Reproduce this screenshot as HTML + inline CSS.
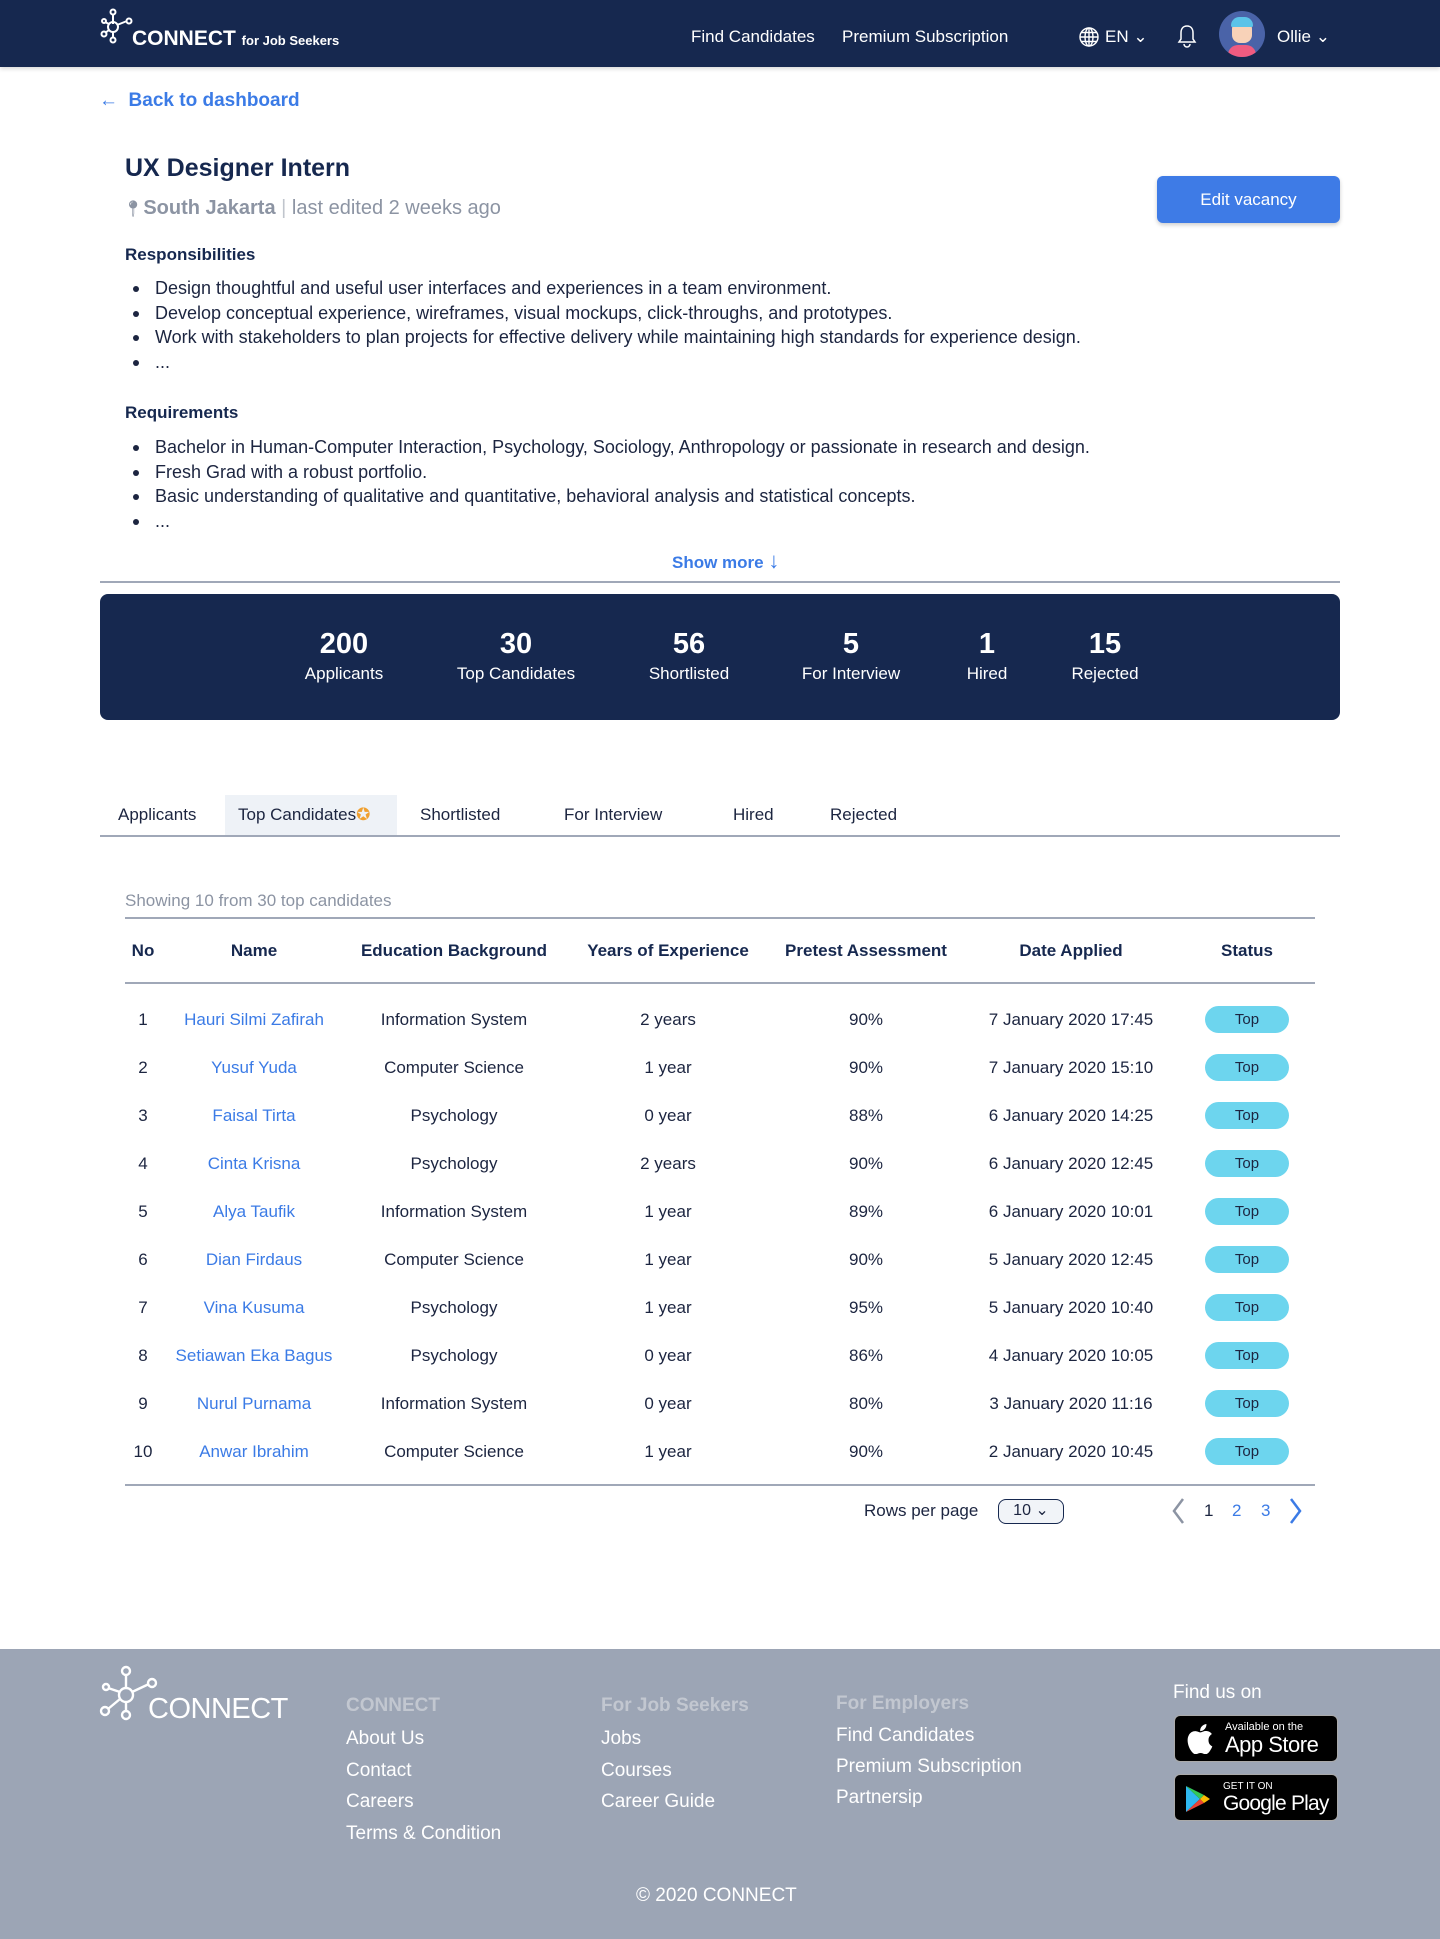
<!DOCTYPE html>
<html><head><meta charset="utf-8"><style>
*{box-sizing:border-box;margin:0;padding:0}
body{width:1440px;height:1939px;position:relative;font-family:"Liberation Sans",sans-serif;color:#1c2540;background:#fff;overflow:hidden}
.a{position:absolute;white-space:nowrap}
.nav{position:absolute;left:0;top:0;width:1440px;height:67px;background:#16284f;box-shadow:0 2px 4px rgba(0,0,0,.15)}
.nav .a{color:#fff}
.blue{color:#3b7be6}
ul.b{position:absolute;left:155px;list-style:none;font-size:18px;line-height:24.7px;color:#1c2540}
ul.b li{position:relative}
ul.b li:before{content:"";position:absolute;left:-22px;top:10px;width:6px;height:6px;border-radius:50%;background:#1c2540}
.stats{position:absolute;left:100px;top:594px;width:1240px;height:126px;background:#16284f;border-radius:8px;color:#fff}
.stat{position:absolute;top:34px;text-align:center;transform:translateX(-50%)}
.stat b{display:block;font-size:29px;line-height:32px}
.stat span{display:block;font-size:17px;margin-top:4px}
.tab{position:absolute;top:805px;font-size:17px;color:#1c2540}
.hr{position:absolute;height:1.5px;background:#a0a8b8}
.row{position:absolute;left:125px;width:1190px;height:30px;font-size:17px}
.row div{position:absolute;top:1px;transform:translateX(-50%);white-space:nowrap}
.top{background:#6dd5ee;border-radius:14px;width:84px;height:27px;text-align:center;line-height:27px;font-size:15px;top:-3px!important}
.foot{position:absolute;left:0;top:1649px;width:1440px;height:290px;background:#9ca5b5;color:#fff}
.foot .a{font-size:19px}
.fh{color:#c2c7d0;font-weight:bold}
.badge{position:absolute;left:1174px;width:164px;height:47px;background:#000;border:1px solid #aaa;border-radius:6px;color:#fff;overflow:hidden}
</style></head><body>
<div class="nav">
 <svg class="a" style="left:100px;top:8px" width="36" height="36" viewBox="0 0 36 36" fill="none" stroke="#fff" stroke-width="2"><circle cx="13" cy="4" r="2.5"/><circle cx="13" cy="19" r="5"/><circle cx="29" cy="13" r="2.5"/><circle cx="4" cy="26" r="2.5"/><circle cx="13" cy="32" r="2.5"/><circle cx="4" cy="13" r="2"/><path d="M13 7v9M17 17l10-4M9 22l-4 3M13 24v6M9 16l-4-2"/></svg>
 <div class="a" style="left:132px;top:27px;font-size:21px;font-weight:bold">CONNECT <span style="font-size:13px">for Job Seekers</span></div>
 <div class="a" style="left:691px;top:27px;font-size:17px">Find Candidates</div>
 <div class="a" style="left:842px;top:27px;font-size:17px">Premium Subscription</div>
 <svg class="a" style="left:1079px;top:27px" width="20" height="20" viewBox="0 0 20 20" fill="none" stroke="#fff" stroke-width="1.4"><circle cx="10" cy="10" r="9"/><ellipse cx="10" cy="10" rx="4" ry="9"/><path d="M1 10h18M2.5 5.5h15M2.5 14.5h15M10 1v18"/></svg>
 <div class="a" style="left:1105px;top:27px;font-size:17px">EN ⌄</div>
 <svg class="a" style="left:1177px;top:24px" width="20" height="24" viewBox="0 0 20 24" fill="none" stroke="#fff" stroke-width="1.5"><path d="M10 2c-4 0-6 3-6 7v6l-2 3h16l-2-3V9c0-4-2-7-6-7zM7 20a3 3 0 0 0 6 0"/></svg>
 <div class="a" style="left:1219px;top:11px;width:46px;height:46px;border-radius:50%;background:#4a63a8;overflow:hidden">
  <div class="a" style="left:13px;top:10px;width:20px;height:22px;border-radius:8px;background:#f8d2b8"></div>
  <div class="a" style="left:12px;top:6px;width:22px;height:10px;border-radius:10px 10px 2px 2px;background:#5bc3e8"></div>
  <div class="a" style="left:9px;top:34px;width:28px;height:14px;border-radius:10px 10px 0 0;background:#f05b80"></div>
 </div>
 <div class="a" style="left:1277px;top:27px;font-size:17px">Ollie ⌄</div>
</div>

<div class="a blue" style="left:99px;top:90px;font-size:19px;font-weight:bold">←&nbsp; Back to dashboard</div>
<div class="a" style="left:125px;top:154px;font-size:25px;font-weight:bold;color:#16284f">UX Designer Intern</div>
<div class="a" style="left:123px;top:197px;font-size:20px;color:#8c94a3"><span style="font-size:16px">📍︎</span><b style="color:#8c94a3">South Jakarta</b> <span style="color:#c0c5cd">|</span> last edited 2 weeks ago</div>
<div class="a" style="left:1157px;top:176px;width:183px;height:47px;border-radius:6px;background:#3e7be6;color:#fff;font-size:17px;text-align:center;line-height:47px;box-shadow:0 2px 4px rgba(0,0,0,.2)">Edit vacancy</div>

<div class="a" style="left:125px;top:245px;font-size:17px;font-weight:bold;color:#16284f">Responsibilities</div>
<ul class="b" style="top:276px"><li>Design thoughtful and useful user interfaces and experiences in a team environment.</li><li>Develop conceptual experience, wireframes, visual mockups, click-throughs, and prototypes.</li><li>Work with stakeholders to plan projects for effective delivery while maintaining high standards for experience design.</li><li>...</li></ul>
<div class="a" style="left:125px;top:403px;font-size:17px;font-weight:bold;color:#16284f">Requirements</div>
<ul class="b" style="top:435px"><li>Bachelor in Human-Computer Interaction, Psychology, Sociology, Anthropology or passionate in research and design.</li><li>Fresh Grad with a robust portfolio.</li><li>Basic understanding of qualitative and quantitative, behavioral analysis and statistical concepts.</li><li>...</li></ul>
<div class="a blue" style="left:672px;top:548px;font-size:17px;font-weight:bold">Show more <span style="font-weight:normal;font-size:22px">↓</span></div>
<div class="hr" style="left:100px;top:581px;width:1240px"></div>

<div class="stats">
 <div class="stat" style="left:244px"><b>200</b><span>Applicants</span></div>
 <div class="stat" style="left:416px"><b>30</b><span>Top Candidates</span></div>
 <div class="stat" style="left:589px"><b>56</b><span>Shortlisted</span></div>
 <div class="stat" style="left:751px"><b>5</b><span>For Interview</span></div>
 <div class="stat" style="left:887px"><b>1</b><span>Hired</span></div>
 <div class="stat" style="left:1005px"><b>15</b><span>Rejected</span></div>
</div>

<div class="a" style="left:225px;top:795px;width:172px;height:40px;background:#eef2f7"></div>
<div class="tab" style="left:118px">Applicants</div>
<div class="tab blue" style="left:238px">Top Candidates<span style="color:#f0a030">✪</span></div>
<div class="tab" style="left:420px">Shortlisted</div>
<div class="tab" style="left:564px">For Interview</div>
<div class="tab" style="left:733px">Hired</div>
<div class="tab" style="left:830px">Rejected</div>
<div class="hr" style="left:100px;top:835px;width:1240px"></div>

<div class="a" style="left:125px;top:891px;font-size:17px;color:#8c94a3">Showing 10 from 30 top candidates</div>
<div class="hr" style="left:125px;top:917px;width:1190px"></div>
<div class="row" style="top:940px;font-weight:bold;color:#16284f"><div style="left:18px">No</div><div style="left:129px">Name</div><div style="left:329px">Education Background</div><div style="left:543px">Years of Experience</div><div style="left:741px">Pretest Assessment</div><div style="left:946px">Date Applied</div><div style="left:1122px">Status</div></div>
<div class="hr" style="left:125px;top:982px;width:1190px"></div>

<div class="row" style="top:1009px"><div style="left:18px">1</div><div class="blue" style="left:129px">Hauri Silmi Zafirah</div><div style="left:329px">Information System</div><div style="left:543px">2 years</div><div style="left:741px">90%</div><div style="left:946px">7 January 2020 17:45</div><div class="top" style="left:1122px">Top</div></div>
<div class="row" style="top:1057px"><div style="left:18px">2</div><div class="blue" style="left:129px">Yusuf Yuda</div><div style="left:329px">Computer Science</div><div style="left:543px">1 year</div><div style="left:741px">90%</div><div style="left:946px">7 January 2020 15:10</div><div class="top" style="left:1122px">Top</div></div>
<div class="row" style="top:1105px"><div style="left:18px">3</div><div class="blue" style="left:129px">Faisal Tirta</div><div style="left:329px">Psychology</div><div style="left:543px">0 year</div><div style="left:741px">88%</div><div style="left:946px">6 January 2020 14:25</div><div class="top" style="left:1122px">Top</div></div>
<div class="row" style="top:1153px"><div style="left:18px">4</div><div class="blue" style="left:129px">Cinta Krisna</div><div style="left:329px">Psychology</div><div style="left:543px">2 years</div><div style="left:741px">90%</div><div style="left:946px">6 January 2020 12:45</div><div class="top" style="left:1122px">Top</div></div>
<div class="row" style="top:1201px"><div style="left:18px">5</div><div class="blue" style="left:129px">Alya Taufik</div><div style="left:329px">Information System</div><div style="left:543px">1 year</div><div style="left:741px">89%</div><div style="left:946px">6 January 2020 10:01</div><div class="top" style="left:1122px">Top</div></div>
<div class="row" style="top:1249px"><div style="left:18px">6</div><div class="blue" style="left:129px">Dian Firdaus</div><div style="left:329px">Computer Science</div><div style="left:543px">1 year</div><div style="left:741px">90%</div><div style="left:946px">5 January 2020 12:45</div><div class="top" style="left:1122px">Top</div></div>
<div class="row" style="top:1297px"><div style="left:18px">7</div><div class="blue" style="left:129px">Vina Kusuma</div><div style="left:329px">Psychology</div><div style="left:543px">1 year</div><div style="left:741px">95%</div><div style="left:946px">5 January 2020 10:40</div><div class="top" style="left:1122px">Top</div></div>
<div class="row" style="top:1345px"><div style="left:18px">8</div><div class="blue" style="left:129px">Setiawan Eka Bagus</div><div style="left:329px">Psychology</div><div style="left:543px">0 year</div><div style="left:741px">86%</div><div style="left:946px">4 January 2020 10:05</div><div class="top" style="left:1122px">Top</div></div>
<div class="row" style="top:1393px"><div style="left:18px">9</div><div class="blue" style="left:129px">Nurul Purnama</div><div style="left:329px">Information System</div><div style="left:543px">0 year</div><div style="left:741px">80%</div><div style="left:946px">3 January 2020 11:16</div><div class="top" style="left:1122px">Top</div></div>
<div class="row" style="top:1441px"><div style="left:18px">10</div><div class="blue" style="left:129px">Anwar Ibrahim</div><div style="left:329px">Computer Science</div><div style="left:543px">1 year</div><div style="left:741px">90%</div><div style="left:946px">2 January 2020 10:45</div><div class="top" style="left:1122px">Top</div></div>
<div class="hr" style="left:125px;top:1484px;width:1190px"></div>

<div class="a" style="left:864px;top:1501px;font-size:17px">Rows per page</div>
<div class="a" style="left:998px;top:1499px;width:66px;height:25px;border:1.5px solid #16284f;border-radius:8px;background:#f1f4f8;font-size:16px;text-align:center;line-height:22px">10 ⌄</div>
<svg class="a" style="left:1170px;top:1497px" width="16" height="28" viewBox="0 0 16 28" fill="none" stroke="#8c94a3" stroke-width="2.5"><path d="M13 2L4 14l9 12"/></svg>
<div class="a" style="left:1204px;top:1501px;font-size:17px">1</div>
<div class="a blue" style="left:1232px;top:1501px;font-size:17px">2</div>
<div class="a blue" style="left:1261px;top:1501px;font-size:17px">3</div>
<svg class="a" style="left:1288px;top:1497px" width="16" height="28" viewBox="0 0 16 28" fill="none" stroke="#3b7be6" stroke-width="2.5"><path d="M3 2l9 12-9 12"/></svg>

<div class="foot">
 <svg class="a" style="left:99px;top:16px" width="60" height="56" viewBox="0 0 60 56" fill="none" stroke="#fff" stroke-width="2.4"><circle cx="27" cy="6" r="4"/><circle cx="27" cy="30" r="7"/><circle cx="53" cy="18" r="4"/><circle cx="6" cy="46" r="4"/><circle cx="27" cy="50" r="4"/><circle cx="7" cy="22" r="3"/><path d="M27 10v13M33 27l17-8M21 34l-12 10M27 37v9M21 27L9 23"/></svg>
 <div class="a" style="left:148px;top:44px;font-size:29px;color:#fff;letter-spacing:-0.5px">CONNECT</div>
 <div class="a fh" style="left:346px;top:46px;font-size:19px">CONNECT</div>
 <div class="a" style="left:346px;top:79px">About Us</div><div class="a" style="left:346px;top:111px">Contact</div><div class="a" style="left:346px;top:142px">Careers</div><div class="a" style="left:346px;top:174px">Terms &amp; Condition</div>
 <div class="a fh" style="left:601px;top:46px;font-size:19px">For Job Seekers</div>
 <div class="a" style="left:601px;top:79px">Jobs</div><div class="a" style="left:601px;top:111px">Courses</div><div class="a" style="left:601px;top:142px">Career Guide</div>
 <div class="a fh" style="left:836px;top:44px;font-size:19px">For Employers</div>
 <div class="a" style="left:836px;top:76px">Find Candidates</div><div class="a" style="left:836px;top:107px">Premium Subscription</div><div class="a" style="left:836px;top:138px">Partnersip</div>
 <div class="a" style="left:1173px;top:33px">Find us on</div>
 <div class="badge" style="top:66px"><svg class="a" style="left:12px;top:8px" width="26" height="30" viewBox="0 0 26 30"><path fill="#fff" d="M21.5 16c0-4 3.2-5.8 3.4-6-1.9-2.7-4.7-3-5.7-3-2.4-.3-4.7 1.4-5.9 1.4-1.2 0-3.1-1.4-5.1-1.3C5.6 7.1 3.2 8.6 1.9 11c-2.7 4.7-.7 11.6 1.9 15.4 1.3 1.8 2.8 3.9 4.8 3.8 1.9-.1 2.7-1.2 5-1.2s3 1.2 5 1.2c2.1 0 3.4-1.9 4.6-3.7 1.5-2.1 2.1-4.1 2.1-4.2-.1 0-4-1.5-3.8-6.3zM17.8 4.9c1-1.3 1.8-3 1.6-4.9-1.6.1-3.5 1.1-4.6 2.4-1 1.1-1.9 2.9-1.6 4.7 1.7.1 3.5-.9 4.6-2.2z"/></svg><div class="a" style="left:50px;top:5px;font-size:11px">Available on the</div><div class="a" style="left:50px;top:16px;font-size:22px;letter-spacing:-0.5px">App Store</div></div>
 <div class="badge" style="top:125px"><svg class="a" style="left:10px;top:10px" width="26" height="28" viewBox="0 0 26 28"><path d="M1 1l14 13L1 27z" fill="#2fb8f0"/><path d="M1 1l18 9-4 4z" fill="#34c759"/><path d="M1 27l18-9-4-4z" fill="#ea4335"/><path d="M19 10l6 4-6 4-4-4z" fill="#fbbc05"/></svg><div class="a" style="left:48px;top:6px;font-size:10px">GET IT ON</div><div class="a" style="left:48px;top:17px;font-size:21px;letter-spacing:-0.8px">Google Play</div></div>
 <div class="a" style="left:636px;top:236px">© 2020 CONNECT</div>
</div>
</body></html>
